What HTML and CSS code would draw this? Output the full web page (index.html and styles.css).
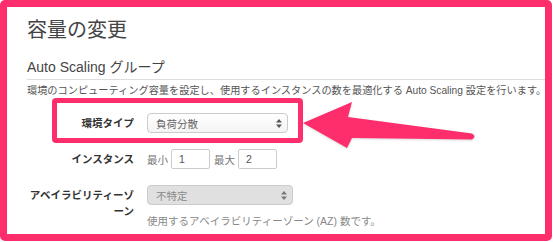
FILE: index.html
```html
<!DOCTYPE html>
<html lang="ja">
<head>
  <meta charset="UTF-8">
  <title>容量の変更</title>
  <link rel="stylesheet" href="styles.css">
</head>
<body>
  <div class="frame">
    <h1 class="title">容量の変更</h1>

    <!-- Auto Scaling section -->
    <h2 class="section-title">Auto Scaling グループ</h2>
    <p class="desc">環境のコンピューティング容量を設定し、使用するインスタンスの数を最適化する Auto Scaling 設定を行います。</p>

    <div class="form">
      <div class="label label-mid">環境タイプ</div>
      <div class="field">
        <div class="select">
          <span>負荷分散</span>
          <svg class="caret" width="6" height="9" viewBox="0 0 6 9"><path d="M3 0 L6 3.5 H0 Z M3 9 L6 5.5 H0 Z" fill="#555"/></svg>
        </div>
      </div>

      <div class="label label-mid">インスタンス</div>
      <div class="field range">
        <span class="unit">最小</span>
        <div class="input">1</div>
        <span class="unit">最大</span>
        <div class="input">2</div>
      </div>

      <div class="label label-top">アベイラビリティーゾーン</div>
      <div class="field">
        <div class="select select-off">
          <span>不特定</span>
          <svg class="caret" width="6" height="9" viewBox="0 0 6 9"><path d="M3 0 L6 3.5 H0 Z M3 9 L6 5.5 H0 Z" fill="#777"/></svg>
        </div>
        <p class="help">使用するアベイラビリティーゾーン (AZ) 数です。</p>
      </div>
    </div>

    <!-- annotation overlay -->
    <div class="mark"></div>
    <svg class="arrow" width="182" height="56" viewBox="298 98 182 56">
      <path d="M303 123 L352 102 L348 117 L472 133.5 Q477 136.5 472 139.5 L352 138 L347 148 Z" fill="#fd2e6b"/>
    </svg>
  </div>
</body>
</html>
```

FILE: styles.css
```css
body {
  margin: 0;
  background-color: #fff;
  font-family: "Liberation Sans", "Noto Sans CJK JP", sans-serif;
  color: #333;
}

.frame {
  position: relative;
  box-sizing: border-box;
  width: 552px;
  height: 241px;
  border: 7px solid #fd2e6b;
  border-radius: 5px;
  padding: 11px 0 0 20px;
  background-color: #fff;
}

.title {
  margin: 0;
  font-size: 20px;
  line-height: 24px;
  font-weight: normal;
  color: #444;
}

.section-title {
  margin: 16px 0 0;
  padding-bottom: 3px;
  border-bottom: 1px solid #ddd;
  font-size: 14px;
  line-height: 18px;
  font-weight: normal;
  color: #444;
}

.desc {
  margin: 4px 0 0;
  font-size: 10.2px;
  line-height: 14px;
  color: #555;
  white-space: nowrap;
}

.form {
  display: grid;
  grid-template-columns: 107px 1fr;
  column-gap: 13px;
  row-gap: 16px;
  margin-top: 15px;
}

.label {
  text-align: right;
  font-size: 10.5px;
  font-weight: bold;
  color: #333;
  line-height: 16px;
}

.label-mid {
  align-self: center;
}

.label-top {
  padding-top: 2px;
  line-break: anywhere;
}

.field {
  font-size: 10.5px;
  color: #666;
}

.select {
  box-sizing: border-box;
  display: flex;
  align-items: center;
  justify-content: space-between;
  width: 141px;
  height: 20px;
  padding: 0 5px 0 8px;
  border: 1px solid #ccc;
  border-radius: 4px;
  background: linear-gradient(#fff, #f4f4f4);
  color: #666;
}

.select-off {
  width: 146px;
  background: #e0e0e0;
  color: #888;
}

.range {
  display: flex;
  align-items: center;
}

.unit {
  color: #777;
  margin-right: 3px;
}

.input {
  box-sizing: border-box;
  width: 39px;
  height: 20px;
  line-height: 18px;
  padding-left: 7px;
  margin-right: 4px;
  border: 1px solid #ccc;
  border-radius: 2px;
  background-color: #fff;
  color: #555;
}

.help {
  margin: 9px 0 0;
  line-height: 14px;
  color: #888;
  white-space: nowrap;
}

.mark {
  position: absolute;
  left: 45px;
  top: 91px;
  width: 241px;
  height: 35px;
  border: 5px solid #fd2e6b;
  border-radius: 4px;
}

.arrow {
  position: absolute;
  left: 291px;
  top: 91px;
  filter: drop-shadow(0 1px 1px rgba(0, 0, 0, 0.15));
}
```
